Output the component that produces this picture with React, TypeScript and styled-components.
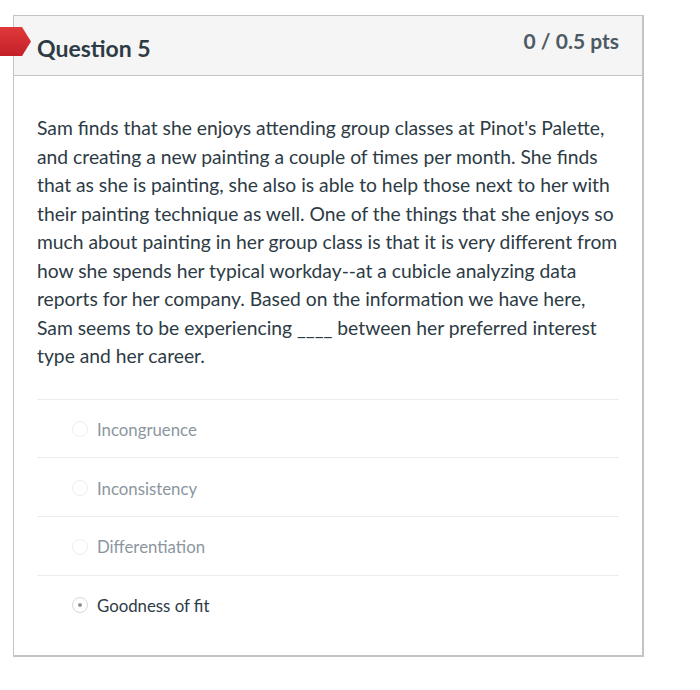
import React from 'react';
import styled, { createGlobalStyle } from 'styled-components';

const GlobalStyle = createGlobalStyle`
  body {
    margin: 0;
    background: #ffffff;
    font-family: Lato, "Open Sans", sans-serif;
    color: #2d3b45;
  }
`;

const Page = styled.div`
  position: relative;
  padding: 15px 0 30px 13px;
`;

const Card = styled.div`
  width: 631px;
  border: 1px solid #c4c4c4;
  border-right-width: 2px;
  border-bottom-width: 2px;
  box-sizing: border-box;
  background: #fff;
`;

const Header = styled.div`
  display: flex;
  align-items: center;
  justify-content: space-between;
  height: 59px;
  padding: 0 23px 0 23px;
  background: #f5f5f5;
  border-bottom: 1px solid #c4c4c4;
`;

const Title = styled.h2`
  margin: 4px 0 0;
  font-size: 23px;
  font-weight: 700;
  color: #2d3b45;
`;

const Points = styled.span`
  margin-top: -10px;
  font-size: 21px;
  font-weight: 700;
  color: #4d5a63;
`;

const Flag = styled.svg`
  position: absolute;
  left: 0;
  top: 27px;
`;

const Body = styled.div`
  padding: 38px 23px 22px;
`;

const Text = styled.p`
  margin: 0;
  font-size: 19.3px;
  line-height: 28.5px;
  color: #2d3b45;
`;

const Answers = styled.div`
  margin-top: 28px;
`;

const Answer = styled.div`
  box-sizing: border-box;
  display: flex;
  align-items: center;
  gap: 9px;
  height: 58.7px;
  padding: 2px 0 0 35px;
  border-top: 1px solid #eaeced;
`;

const Radio = styled.span<{ $checked?: boolean }>`
  box-sizing: border-box;
  width: 16px;
  height: 16px;
  border-radius: 50%;
  border: 1px solid ${({ $checked }) => ($checked ? '#d6d9dc' : '#eceeef')};
  display: flex;
  align-items: center;
  justify-content: center;

  &::after {
    content: '';
    width: 4px;
    height: 4px;
    border-radius: 50%;
    background: ${({ $checked }) => ($checked ? '#8d959b' : 'transparent')};
  }
`;

const Label = styled.span<{ $checked?: boolean }>`
  font-size: 16.8px;
  color: ${({ $checked }) => ($checked ? '#2d3b45' : '#8b969e')};
`;

const answers = [
  { text: 'Incongruence', checked: false },
  { text: 'Inconsistency', checked: false },
  { text: 'Differentiation', checked: false },
  { text: 'Goodness of fit', checked: true },
];

export default function App() {
  return (
    <Page>
      <GlobalStyle />
      <Flag width="31" height="29" viewBox="0 0 31 29">
        <defs>
          <linearGradient id="flagred" x1="0" y1="0" x2="0" y2="1">
            <stop offset="0" stopColor="#e0393b" />
            <stop offset="1" stopColor="#c4202a" />
          </linearGradient>
        </defs>
        <polygon points="0,0 22,0 31,14.5 22,29 0,29" fill="url(#flagred)" />
      </Flag>
      <Card>
        <Header>
          <Title>Question 5</Title>
          <Points>0 / 0.5 pts</Points>
        </Header>
        <Body>
          <Text>
            Sam finds that she enjoys attending group classes at Pinot's Palette, and creating a new
            painting a couple of times per month. She finds that as she is painting, she also is able
            to help those next to her with their painting technique as well. One of the things that
            she enjoys so much about painting in her group class is that it is very different from how
            she spends her typical workday--at a cubicle analyzing data reports for her company. Based
            on the information we have here, Sam seems to be experiencing ____ between her preferred
            interest type and her career.
          </Text>
          <Answers>
            {answers.map((a) => (
              <Answer key={a.text}>
                <Radio $checked={a.checked} />
                <Label $checked={a.checked}>{a.text}</Label>
              </Answer>
            ))}
          </Answers>
        </Body>
      </Card>
    </Page>
  );
}
